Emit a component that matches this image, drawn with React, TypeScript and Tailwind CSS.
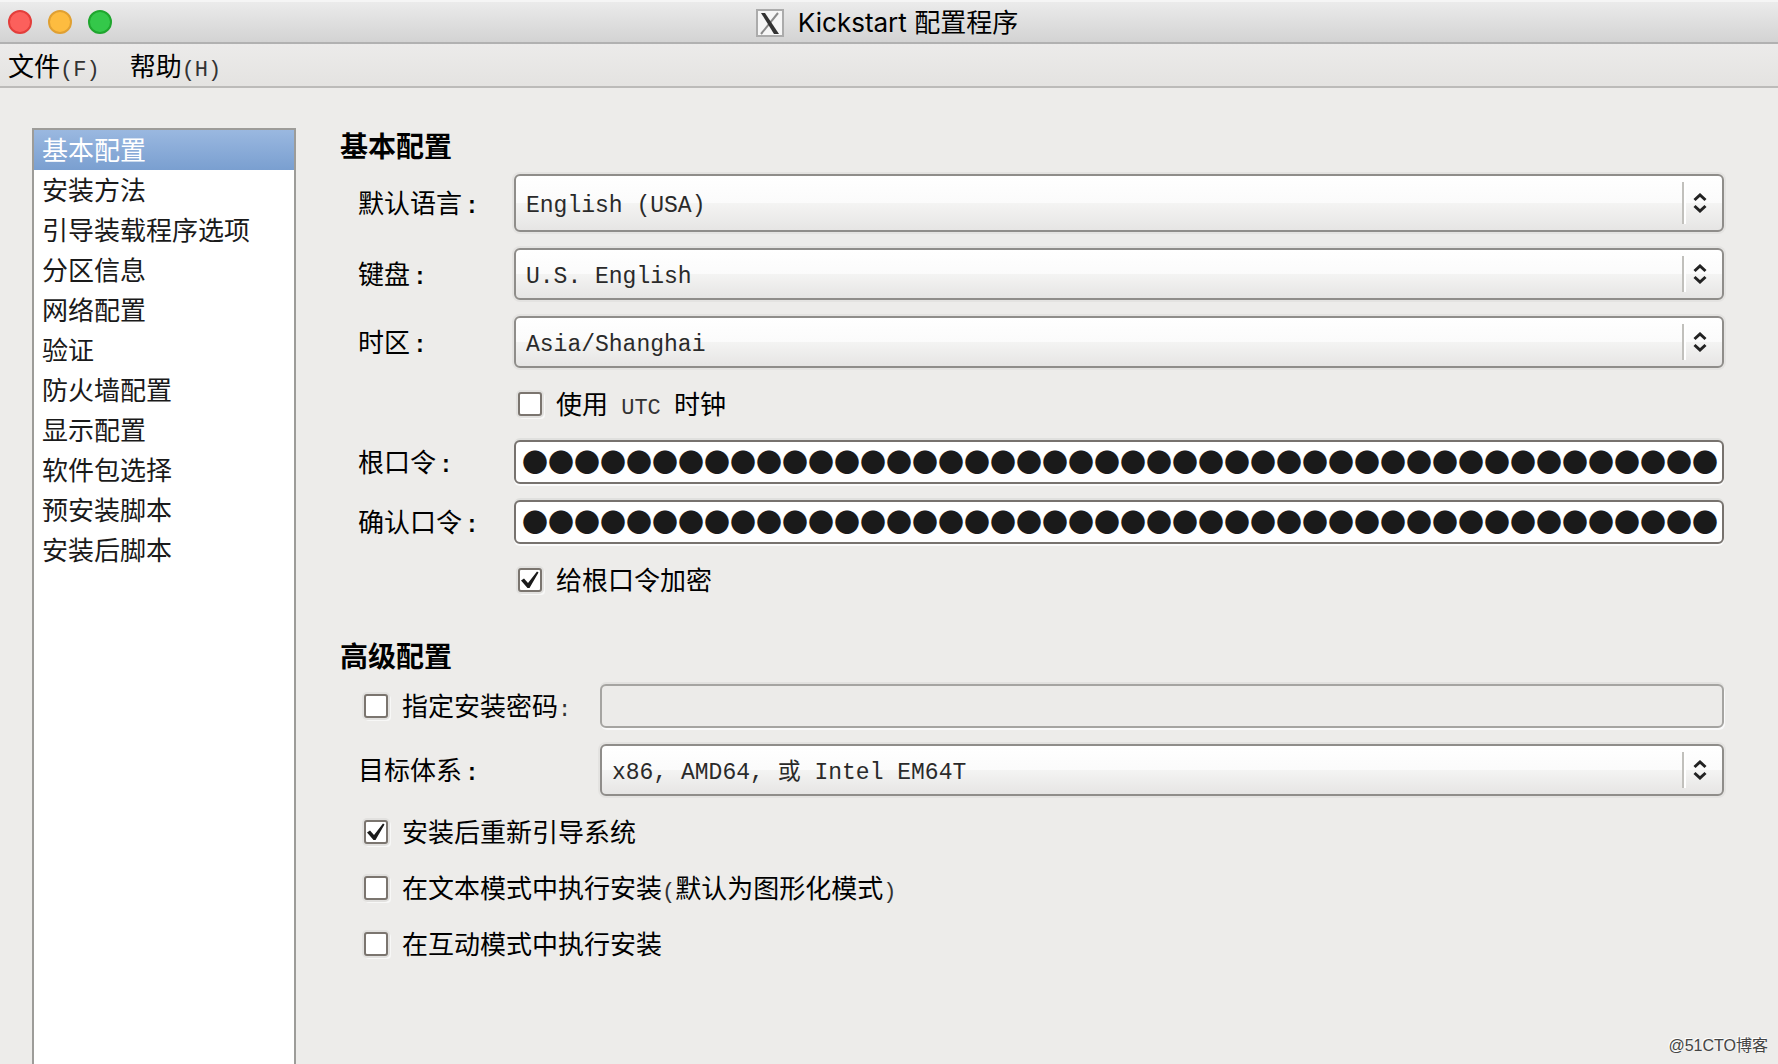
import React, { useState } from 'react';

const sections = [
  "基本配置",
  "安装方法",
  "引导装载程序选项",
  "分区信息",
  "网络配置",
  "验证",
  "防火墙配置",
  "显示配置",
  "软件包选择",
  "预安装脚本",
  "安装后脚本"
];

const Latin: React.FC<{ children: React.ReactNode }> = ({ children }) => (
  <span className="font-['Liberation_Mono',monospace] text-[22px] leading-none whitespace-pre text-[#333333]">{children}</span>
);

const FieldLabel: React.FC<{ htmlFor: string; wide?: boolean; children: React.ReactNode }> = ({ htmlFor, wide, children }) => (
  <label htmlFor={htmlFor} className={`shrink-0 pb-[2px] ${wide ? 'w-[242px]' : 'w-[156px]'}`}>
    {children}
    <span className="pl-[3px] font-['Liberation_Mono',monospace] text-[23px] leading-none font-bold">:</span>
  </label>
);

const Combo: React.FC<{ id: string; value: string; tall?: boolean }> = ({ id, value, tall }) => (
  <div className={`relative flex-1 ${tall ? 'h-[58px]' : 'h-[52px]'}`}>
    <select
      id={id}
      defaultValue={value}
      className="h-full w-full appearance-none rounded-md border-2 border-[#8f8d8a] bg-[linear-gradient(#ffffff,#fbfbfb_50%,#f4f4f3_50%,#e6e5e4)] pt-[5px] pr-14 pl-[10px] font-['Liberation_Mono','Noto_Sans_CJK_SC',monospace] text-[23px] text-[#2a2a2a] shadow-[0_0_0_2px_#e4e3e1] outline-none"
    >
      <option>{value}</option>
    </select>
    <div className="pointer-events-none absolute inset-y-2 right-[38px] w-1 border-r-2 border-l-2 border-r-white border-l-[#c1c0bc]"></div>
    <div className="pointer-events-none absolute inset-y-0 right-[17px] flex items-center">
      <svg width="14" height="20" viewBox="0 0 14 20" fill="none" stroke="#222222" strokeWidth="3">
        <path d="M1.5 7 L7 2 L12.5 7" />
        <path d="M1.5 13 L7 18 L12.5 13" />
      </svg>
    </div>
  </div>
);

const Check: React.FC<{ checked?: boolean; children: React.ReactNode }> = ({ checked, children }) => (
  <label className="flex items-center gap-[14px]">
    <span className="relative h-6 w-6">
      <input
        type="checkbox"
        defaultChecked={checked}
        className="peer block h-6 w-6 appearance-none rounded-[3px] border-2 border-[#7b756f] bg-white shadow-[0_0_0_2px_#e2e1df,2px_2px_0_1px_#f8f8f7]"
      />
      <svg className="pointer-events-none absolute inset-0 hidden peer-checked:block" width="24" height="24" viewBox="0 0 24 24">
        <path d="M3 12.5 L6 10.5 L10 15 L19 3.5 L20.5 4.5 L11.5 20 L9.5 20 Z" fill="#1a1a1a" />
      </svg>
    </span>
    <span className="pb-[2px]">{children}</span>
  </label>
);

const MASKED = "●".repeat(46);

const PasswordField: React.FC<{ id: string }> = ({ id }) => (
  <input
    id={id}
    defaultValue={MASKED}
    className="h-11 min-w-0 flex-1 rounded-md border-2 border-[#77726e] bg-white pb-[3px] pl-[6px] font-['Noto_Sans_CJK_SC',sans-serif] text-[26px] text-[#1a1a1a] shadow-[0_-2px_0_#e0e0de,0_2px_0_#fafafa] outline-none"
  />
);

const App: React.FC = () => {
  const [active, setActive] = useState(0);

  return (
    <div className="relative flex min-h-screen flex-col bg-[#edecea] font-['Noto_Sans_CJK_SC',sans-serif] text-[26px] leading-9 text-black">
      {/* Title bar */}
      <header className="relative flex h-11 items-center justify-center border-t-2 border-b-2 border-t-[#f5f5f5] border-b-[#b1b1b1] bg-linear-to-b from-[#ebebeb] to-[#d3d3d3]">
        <div className="absolute left-2 flex gap-4">
          <button aria-label="关闭" className="h-6 w-6 rounded-full border-2 border-[#e33e3b] bg-[#fc605c]"></button>
          <button aria-label="最小化" className="h-6 w-6 rounded-full border-2 border-[#e0a032] bg-[#fdbc40]"></button>
          <button aria-label="缩放" className="h-6 w-6 rounded-full border-2 border-[#1fa62e] bg-[#34c84a]"></button>
        </div>
        <div className="flex items-center gap-[14px] pt-[2px] pr-1">
          <svg width="28" height="28" viewBox="0 0 28 28" fill="none">
            <rect x="1" y="1" width="26" height="26" fill="#f6f6f6" stroke="#ababab" strokeWidth="2" />
            <path d="M22 4 L5 25" stroke="#8a8a8a" strokeWidth="2" />
            <path d="M5 4 H9 L23 25 H18 Z" fill="#333333" />
          </svg>
          <h1 className="font-['Inter',sans-serif] text-[26px]">
            Kickstart <span className="font-['Noto_Sans_CJK_SC',sans-serif] leading-none">配置程序</span>
          </h1>
        </div>
      </header>

      {/* Menu bar */}
      <nav className="flex h-11 items-center gap-[30px] border-b-2 border-[#bcbbb9] bg-linear-to-b from-[#ecebea] to-[#e4e3e1] px-2">
        <button>文件<Latin>(F)</Latin></button>
        <button>帮助<Latin>(H)</Latin></button>
      </nav>

      <div className="flex flex-1 gap-11 pt-10 pr-[54px] pl-8">
        {/* Section list */}
        <aside className="w-[264px] shrink-0 border-2 border-b-0 border-[#9d9c99] bg-white">
          {sections.map((name, i) => (
            <button
              key={name}
              onClick={() => setActive(i)}
              className={`block h-10 w-full pb-[2px] pl-2 text-left ${i === active ? 'bg-linear-to-b from-[#9ab8e0] to-[#7a9fd0] text-white' : 'text-[#1a1a1a]'}`}
            >
              {name}
            </button>
          ))}
        </aside>

        <main className="min-w-0 flex-1">
          <h2 className="mb-3 text-[28px] leading-[34px] font-bold">基本配置</h2>
          <div className="pl-[18px]">
            <div className="mb-4 flex items-center">
              <FieldLabel htmlFor="lang">默认语言</FieldLabel>
              <Combo id="lang" value="English (USA)" tall />
            </div>
            <div className="mb-4 flex items-center">
              <FieldLabel htmlFor="keyboard">键盘</FieldLabel>
              <Combo id="keyboard" value="U.S. English" />
            </div>
            <div className="flex items-center">
              <FieldLabel htmlFor="timezone">时区</FieldLabel>
              <Combo id="timezone" value="Asia/Shanghai" />
            </div>
            <div className="flex h-[72px] items-center pl-40">
              <Check>使用<Latin> UTC </Latin>时钟</Check>
            </div>
            <div className="mb-4 flex items-center">
              <FieldLabel htmlFor="root-pw">根口令</FieldLabel>
              <PasswordField id="root-pw" />
            </div>
            <div className="flex items-center">
              <FieldLabel htmlFor="confirm-pw">确认口令</FieldLabel>
              <PasswordField id="confirm-pw" />
            </div>
            <div className="flex h-[72px] items-center pl-40">
              <Check checked>给根口令加密</Check>
            </div>
          </div>

          <h2 className="mt-[22px] mb-3 text-[28px] leading-[34px] font-bold">高级配置</h2>
          <div className="pl-[18px]">
            <div className="mb-4 flex items-center">
              <div className="w-[242px] shrink-0 pl-[6px]">
                <Check>指定安装密码<Latin>:</Latin></Check>
              </div>
              <input
                aria-label="安装密码"
                disabled
                className="h-11 min-w-0 flex-1 rounded-md border-2 border-[#a5a4a1] bg-[#ecebe9] px-2 shadow-[0_-2px_0_#e2e1df,1px_2px_0_#fafafa]"
              />
            </div>
            <div className="mb-2 flex items-center">
              <FieldLabel htmlFor="arch" wide>目标体系</FieldLabel>
              <Combo id="arch" value="x86, AMD64, 或 Intel EM64T" />
            </div>
            <div className="flex h-14 items-center pl-[6px]">
              <Check checked>安装后重新引导系统</Check>
            </div>
            <div className="flex h-14 items-center pl-[6px]">
              <Check>在文本模式中执行安装<Latin>(</Latin>默认为图形化模式<Latin>)</Latin></Check>
            </div>
            <div className="flex h-14 items-center pl-[6px]">
              <Check>在互动模式中执行安装</Check>
            </div>
          </div>
        </main>
      </div>

      <div className="absolute right-[10px] bottom-2 font-['Liberation_Sans','Noto_Sans_CJK_SC',sans-serif] text-base leading-5 text-[#444444] [text-shadow:-1px_-1px_0_#ffffff]">
        @51CTO博客
      </div>
    </div>
  );
};

export default App;
